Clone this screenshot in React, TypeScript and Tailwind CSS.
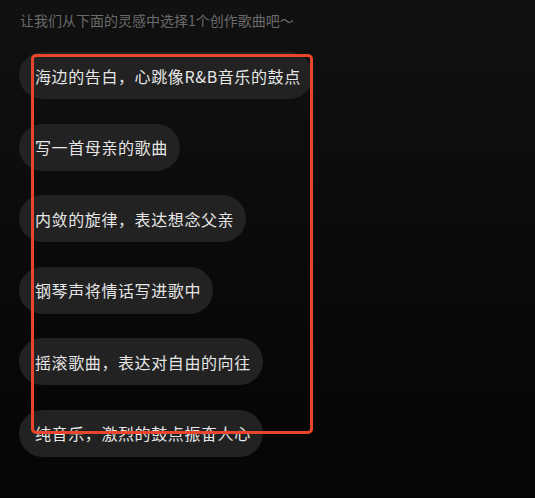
const ideas = [
  "海边的告白，心跳像R&B音乐的鼓点",
  "写一首母亲的歌曲",
  "内敛的旋律，表达想念父亲",
  "钢琴声将情话写进歌中",
  "摇滚歌曲，表达对自由的向往",
  "纯音乐，激烈的鼓点振奋人心",
];

export default function App() {
  return (
    <div
      className="relative min-h-screen h-[498px] w-full bg-gradient-to-b from-[#111111] to-[#050505] px-5 pt-[10px] overflow-hidden"
      style={{ fontFamily: '"Noto Sans CJK SC", "Noto Sans", sans-serif' }}
    >
      <p className="text-[14px] leading-[20px] text-[#6b6b6b]">让我们从下面的灵感中选择1个创作歌曲吧～</p>

      <div className="mt-[22px] flex flex-col items-start gap-[24.5px]">
        {ideas.map((text) => (
          <button
            key={text}
            className="-ml-px h-[47px] rounded-full bg-[#222222] pl-4 pr-3 text-[16px] tracking-[0.6px] text-[#e6e6e6] whitespace-nowrap"
          >
            {text}
          </button>
        ))}
      </div>

      {/* annotation frame */}
      <div className="pointer-events-none absolute left-[31px] top-[54px] h-[380px] w-[282px] rounded-[5px] border-[3px] border-[#e8452c]" />
    </div>
  );
}
